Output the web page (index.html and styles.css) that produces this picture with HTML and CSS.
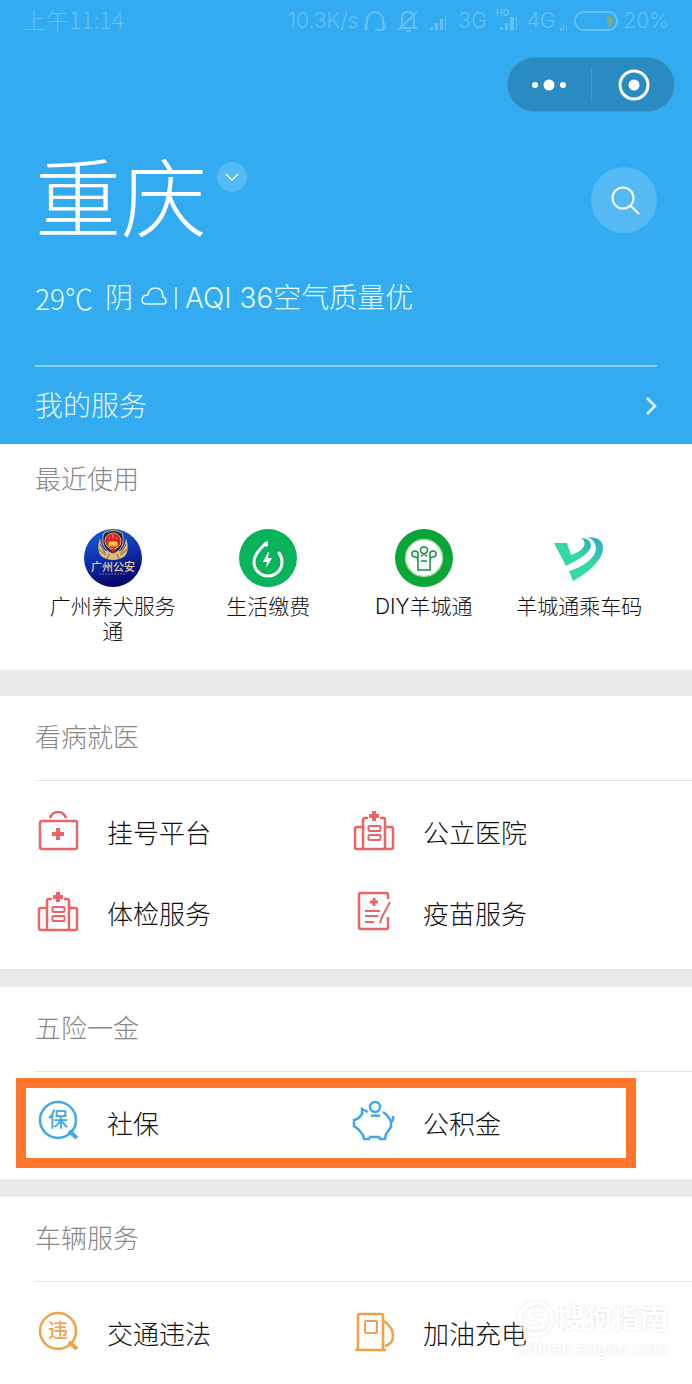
FILE: index.html
```html
<!DOCTYPE html>
<html lang="zh-CN">
  <head>
    <meta charset="UTF-8" />
    <meta name="viewport" content="width=device-width, initial-scale=1" />
    <title>城市服务</title>
    <link rel="stylesheet" href="styles.css">
  </head>
  <body>
    <header class="hero">
      <div class="status">
        <span class="time">上午11:14</span>
        <div class="status-right">
          <span>10.3K/s</span>
          <svg width="24" height="24" viewBox="0 0 24 24" fill="none" stroke="currentColor" stroke-width="2">
            <path d="M4 15V11a8 8 0 0 1 16 0v4M20 21h-8" />
            <path d="M3 14v7M21 14v7" stroke-width="3" />
          </svg>
          <svg class="bell" width="24" height="24" viewBox="0 0 24 24" fill="none" stroke="currentColor" stroke-width="2">
            <path d="M6 17V9q0-6 6-6t6 6v8l2 2H4zM2 21L21 3M10 22h5" />
          </svg>
          <svg class="signal" width="20" height="20" viewBox="0 0 20 20" fill="currentColor">
            <path d="M1 16h3v3H1zM6 12h3v7H6zM11 8h3v11h-3zM16 4h1v15h-1z" />
          </svg>
          <span>3G</span>
          <svg class="signal-hd" width="22" height="24" viewBox="0 0 22 24" fill="currentColor">
            <text x="0" y="7" font-size="9" font-weight="700">HD</text>
            <path d="M4 18h3v3H4zM9 14h3v7H9zM14 8h4v13h-4zM20 6h1v15h-1z" />
          </svg>
          <span>4G</span>
          <svg width="9" height="22" viewBox="0 0 9 22" fill="currentColor">
            <path d="M0 18h2v3H0zM3 15h1v6H3zM6 15h1v6H6z" />
          </svg>
          <svg class="battery" width="44" height="22" viewBox="0 0 44 22" fill="none">
            <rect x="1" y="2" width="42" height="18" rx="9" stroke="currentColor" stroke-width="2" />
            <path d="M33 5q6 1 6 6t-6 6z" fill="#84a878" />
          </svg>
          <span>20%</span>
        </div>
      </div>

      <div class="capsule">
        <button type="button" aria-label="更多">
          <svg width="36" height="12" viewBox="0 0 36 12" fill="#fff">
            <circle cx="4" cy="6" r="3" />
            <circle cx="18" cy="6" r="5.500" />
            <circle cx="32" cy="6" r="3" />
          </svg>
        </button>
        <button type="button" aria-label="关闭">
          <svg width="32" height="32" viewBox="0 0 32 32" fill="none">
            <circle cx="17" cy="16" r="14" stroke="#fff" stroke-width="3" />
            <circle cx="17" cy="16" r="5.500" fill="#fff" />
          </svg>
        </button>
      </div>

      <div class="city">
        <h1>重庆</h1>
        <button type="button" class="city-switch" aria-label="切换城市">
          <svg width="16" height="10" viewBox="0 0 16 10" fill="none" stroke="#fff" stroke-width="1.300">
            <path d="M2 2l6 6 6-6" />
          </svg>
        </button>
        <button type="button" class="search" aria-label="搜索">
          <svg width="30" height="30" viewBox="0 0 30 30" fill="none" stroke="#fff" stroke-width="2">
            <circle cx="14" cy="13" r="10.500" />
            <path d="M21.500 20.500L30 29" />
          </svg>
        </button>
      </div>

      <p class="weather">
        <span class="temp">29℃</span>
        <span>阴</span>
        <svg width="26" height="20" viewBox="0 0 26 20" fill="none" stroke="currentColor" stroke-width="1.500">
          <path d="M6 16Q1 16 1 12q0-5 6-5Q8 0 14 0q8 0 8 9 3 1 3 4 0 3-3 3z" />
        </svg>
        <i class="bar"></i>
        <span>AQI 36空气质量优</span>
      </p>

      <a class="my-service" href="#">
        <span>我的服务</span>
        <svg width="12" height="18" viewBox="0 0 12 18" fill="none" stroke="currentColor" stroke-width="2.500">
          <path d="M2 1l8 8-8 8" />
        </svg>
      </a>
    </header>

    <main>
      <section class="recent">
        <h2>最近使用</h2>
        <div class="apps">
          <a href="#">
            <svg viewBox="0 0 58 58">
              <defs>
                <linearGradient id="police" x1="0" y1="0" x2="0.300" y2="1">
                  <stop offset="0" stop-color="#1763d6" />
                  <stop offset="0.500" stop-color="#0c36b4" />
                  <stop offset="1" stop-color="#06086c" />
                </linearGradient>
              </defs>
              <circle cx="29" cy="29" r="29" fill="url(#police)" />
              <path d="M16 9q-4 12 1 18 5 4 12 4t12-4q5-6 1-18-1 9-6 13H22q-5-4-6-13z" fill="#dcb87c" />
              <path d="M16 15l5 9M14 20l8 6M42 15l-5 9M44 20l-8 6M25 25l-2 5M33 25l2 5" stroke="#8a653e" />
              <path d="M20 4q9-5 18 0 2 4 1 10-2 8-10 11-8-3-10-11-1-6 1-10z" fill="#1a2460" stroke="#e3b578" />
              <circle cx="29" cy="12" r="8" fill="#d9251c" stroke="#f0a050" />
              <path d="M25 13h8v3h-8zM24 17h10M29 6v3M25 9h1M32 9h1" fill="#f8c64a" stroke="#f8c64a" />
              <path d="M25 20h8l-4 4z" fill="#d9251c" />
              <text class="badge-text" x="29" y="42" font-size="11">广州公安</text>
              <path d="M15 45h28" stroke="#8d93cc" stroke-width="0.700" stroke-dasharray="2 1" />
            </svg>
            <span>广州养犬服务通</span>
          </a>
          <a href="#">
            <svg viewBox="0 0 58 58">
              <circle cx="29" cy="29" r="29" fill="#08b35c" />
              <path d="M27 14C21 20 15 26 15 33a14 14 0 0 0 28 0q0-5-3-9" fill="none" stroke="#fff" stroke-width="3" stroke-linecap="round" />
              <path d="M29 11v6l-3 1z" fill="#fff" />
              <path d="M29 23l-5 10h4l-1 6 6-10h-4l1-6z" fill="#fff" />
            </svg>
            <span>生活缴费</span>
          </a>
          <a href="#">
            <svg viewBox="0 0 58 58">
              <circle cx="29" cy="29" r="29" fill="#08a539" />
              <circle cx="29" cy="29" r="18.500" fill="#fff" stroke="#a5dc93" stroke-width="1.500" />
              <g fill="none" stroke="#16913c" stroke-width="1.500">
                <path d="M26 27l5-3a3.500 3.500 0 1 0-4 0l5 3" />
                <path d="M23 29v-4a3 3 0 1 0-3 3q3 0 3 3v10h12V31q0-3 3-3a3 3 0 1 0-3-3v4M26 32h6" />
              </g>
            </svg>
            <span>DIY羊城通</span>
          </a>
          <a href="#">
            <svg viewBox="0 0 58 58">
              <defs>
                <linearGradient id="ride" x1="0" y1="1" x2="1" y2="0">
                  <stop offset="0.500" stop-color="#35d8a5" />
                  <stop offset="1" stop-color="#32a8c4" />
                </linearGradient>
              </defs>
              <path d="M4 14h13l4 12q10-3 13-9 2-5-3-8 9 0 10 7c0 8-13 15-25 21z" fill="url(#ride)" />
              <path d="M38 8q15 0 15 11c0 13-17 26-30 33l-4-10c14-4 26-13 27-22q0-8-8-12z" fill="url(#ride)" />
            </svg>
            <span>羊城通乘车码</span>
          </a>
        </div>
      </section>

      <section class="group">
        <h2>看病就医</h2>
        <div class="items">
          <a class="red" href="#">
            <svg viewBox="0 0 46 46">
              <rect x="5" y="10" width="37" height="28" rx="2" />
              <path d="M15 7q2-6 8-6t8 6" />
              <path d="M17 23h12M23 17v12" stroke-width="4" />
            </svg>
            <span>挂号平台</span>
          </a>
          <a class="red" href="#">
            <svg viewBox="0 0 46 46">
              <path d="M12 38V9q0-2 2-2h3M29 7h3q2 0 2 2v29M12 16H6q-2 0-2 2v18q0 2 2 2h34q2 0 2-2V18q0-2-2-2h-6" />
              <rect x="17.500" y="15" width="12" height="5" rx="1" stroke-width="2" />
              <rect x="17.500" y="24" width="12" height="5" rx="1" stroke-width="2" />
              <path d="M18 5h10M23 0v10" stroke-width="4" />
            </svg>
            <span>公立医院</span>
          </a>
          <a class="red" href="#">
            <svg viewBox="0 0 46 46">
              <path d="M12 38V9q0-2 2-2h3M29 7h3q2 0 2 2v29M12 16H6q-2 0-2 2v18q0 2 2 2h34q2 0 2-2V18q0-2-2-2h-6" />
              <rect x="17.500" y="15" width="12" height="5" rx="1" stroke-width="2" />
              <rect x="17.500" y="24" width="12" height="5" rx="1" stroke-width="2" />
              <path d="M18 5h10M23 0v10" stroke-width="4" />
            </svg>
            <span>体检服务</span>
          </a>
          <a class="red" href="#">
            <svg viewBox="0 0 46 46">
              <path d="M37 7V3q0-2-2-2H10q-2 0-2 2v32q0 2 2 2h25q2 0 2-2V25" />
              <path d="M39 10l-8 15-2 6M14 19h15M14 24h13M14 30h9" stroke-width="2" />
              <path d="M19 10h8M23 6v8" stroke-width="3" />
            </svg>
            <span>疫苗服务</span>
          </a>
        </div>
      </section>

      <section class="group">
        <h2>五险一金</h2>
        <div class="items marked">
          <a class="blue" href="#">
            <svg viewBox="0 0 46 46">
              <circle cx="23" cy="18" r="18" />
              <path d="M34 29l8 7" stroke-width="4" />
              <text x="23" y="25" font-size="20">保</text>
            </svg>
            <span>社保</span>
          </a>
          <a class="blue" href="#">
            <svg viewBox="0 0 46 46">
              <circle cx="24" cy="5" r="5" />
              <path d="M20 14q4-1 9 0M17 10l-6-3v5q-3 5-8 6v6l4 3 5 6 1 4h5l1-2h9l1 2h5l1-5 5-7v-5q-2-6-8-10M40 20q3-2 2-6" />
            </svg>
            <span>公积金</span>
          </a>
        </div>
      </section>

      <section class="group">
        <h2>车辆服务</h2>
        <div class="items">
          <a class="orange" href="#">
            <svg viewBox="0 0 46 46">
              <circle cx="23" cy="19" r="18" />
              <path d="M34 30l8 7" stroke-width="4" />
              <text x="23" y="26" font-size="20">违</text>
            </svg>
            <span>交通违法</span>
          </a>
          <a class="orange" href="#">
            <svg viewBox="0 0 46 46">
              <path d="M7 37V4q0-2 2-2h21q2 0 2 2v33M4 38h31M33 9q9 6 9 15 0 8-8 10" />
              <rect x="14" y="9" width="12" height="12" rx="1" stroke-width="2" />
            </svg>
            <span>加油充电</span>
          </a>
        </div>
        <div class="watermark">
          <svg width="40" height="40" viewBox="0 0 40 40" fill="none" stroke="#fff" stroke-width="4">
            <circle cx="20" cy="20" r="16" />
            <path d="M27 13q-4-3-9-2-6 1-5 5 1 3 7 4 8 1 7 5-1 4-7 4-5 0-8-3" />
          </svg>
          <strong>搜狗指南</strong>
          <small>zhinan.sogou.com</small>
        </div>
      </section>
    </main>
  </body>
</html>
```
FILE: styles.css
```css
* {
  box-sizing: border-box;
}
body {
  margin: 0;
  background: #fff;
  color: #111;
  font-family: Inter, "Noto Sans CJK SC", sans-serif;
  font-weight: 300;
  line-height: 1.5;
}
h1,
h2,
p {
  margin: 0;
  font-weight: 300;
}
a {
  color: inherit;
  text-decoration: none;
}
button {
  display: flex;
  align-items: center;
  justify-content: center;
  padding: 0;
  border: 0;
  background: none;
}
svg {
  flex: none;
  overflow: visible;
}

/* header */
.hero {
  height: 444px;
  padding: 0 35px;
  background: #33abf0;
  color: #e4f8ff;
}
.status {
  display: flex;
  justify-content: space-between;
  height: 57px;
  margin: 0 -12px;
  color: #64c0f5;
  font-size: 21px;
  line-height: 42px;
  white-space: nowrap;
}
.time {
  font-family: "Noto Sans CJK SC", sans-serif;
  font-size: 23px;
  line-height: 38px;
}
.status-right {
  display: flex;
  align-items: center;
  height: 42px;
  gap: 5px;
}
.bell {
  margin-left: 4px;
}
.signal,
.signal-hd {
  margin: 0 4px;
}
.capsule {
  display: flex;
  align-items: center;
  width: 168px;
  height: 55px;
  margin: 0 -18px 0 auto;
  border: 1px solid #4399cf;
  border-radius: 28px;
  background: #298bc2;
}
.capsule button {
  flex: 1;
  height: 34px;
}
.capsule button + button {
  border-left: 1px solid #4399cf;
}
.city {
  display: flex;
  align-items: center;
  height: 100px;
  margin-top: 38px;
}
.city h1 {
  color: #fff;
  font-size: 86px;
  line-height: 100px;
}
.city-switch {
  align-self: flex-start;
  width: 30px;
  height: 30px;
  margin: 12px 0 0 10px;
  border-radius: 50%;
  background: #55b9f3;
}
.search {
  width: 66px;
  height: 66px;
  margin-left: auto;
  border-radius: 50%;
  background: #55b9f3;
}
.weather {
  display: flex;
  align-items: center;
  gap: 8px;
  height: 40px;
  margin: 28px 0 47px;
  font-size: 28px;
  white-space: nowrap;
}
.temp {
  margin-right: 4px;
  font-family: "Noto Sans CJK SC", sans-serif;
  line-height: 36px;
}
.bar {
  width: 2px;
  height: 22px;
  background: #b8e4fb;
}
.my-service {
  display: flex;
  align-items: center;
  justify-content: space-between;
  height: 79px;
  border-top: 2px solid #85cef7;
  font-size: 28px;
}

/* sections */
h2 {
  color: #888;
  font-size: 26px;
}
.recent {
  height: 226px;
  padding: 0 35px;
}
.recent h2 {
  padding: 16px 0 29px;
  line-height: 40px;
}
.apps {
  display: grid;
  grid-template-columns: repeat(4, 1fr);
}
.apps a {
  display: flex;
  flex-direction: column;
  align-items: center;
  gap: 7px;
  padding: 0 12px;
  font-size: 21px;
  line-height: 25px;
  text-align: center;
}
.apps a span {
  margin: 0 -4px;
}
.apps svg {
  width: 58px;
  height: 58px;
}
.badge-text {
  fill: #e6cfa8;
  font-weight: 500;
  text-anchor: middle;
}
.group {
  position: relative;
  border-top: 18px solid #e9eaec;
}
.recent + .group {
  border-top-width: 26px;
}
.group h2 {
  margin-left: 35px;
  border-bottom: 1px solid #e2e2e2;
  line-height: 84px;
}
.items {
  display: grid;
  grid-template-columns: 1fr 1fr;
  padding: 12px 25px 14px 35px;
}
.group:last-child .items {
  padding-bottom: 0;
}
.items a {
  display: flex;
  align-items: center;
  gap: 26px;
  height: 81px;
  font-size: 26px;
}
.items svg {
  width: 46px;
  height: 46px;
  fill: none;
  stroke: currentColor;
  stroke-width: 2.5;
}
.items svg text {
  fill: currentColor;
  stroke: none;
  font-weight: 500;
  text-anchor: middle;
}
.items a span {
  color: #111;
}
.items .red {
  color: #ec6466;
}
.items .blue {
  color: #42a9e6;
}
.items .orange {
  color: #f1a246;
}

/* highlight frame */
.marked {
  position: relative;
}
.marked::after {
  content: "";
  position: absolute;
  inset: 6px 56px 11px 16px;
  border: 10px solid #ff7629;
  pointer-events: none;
}

.watermark {
  position: absolute;
  right: 24px;
  bottom: 16px;
  display: grid;
  grid-template-columns: 40px auto;
  align-items: center;
  color: #fff;
  text-shadow: 0 0 3px #ccc;
  opacity: 0.6;
  pointer-events: none;
}
.watermark svg {
  filter: drop-shadow(0 0 1px #ccc);
}
.watermark strong {
  font-size: 28px;
  font-weight: 700;
  line-height: 40px;
}
.watermark small {
  grid-column: 1 / 3;
  font-size: 17px;
  font-weight: 500;
  line-height: 20px;
  text-align: right;
}
```
